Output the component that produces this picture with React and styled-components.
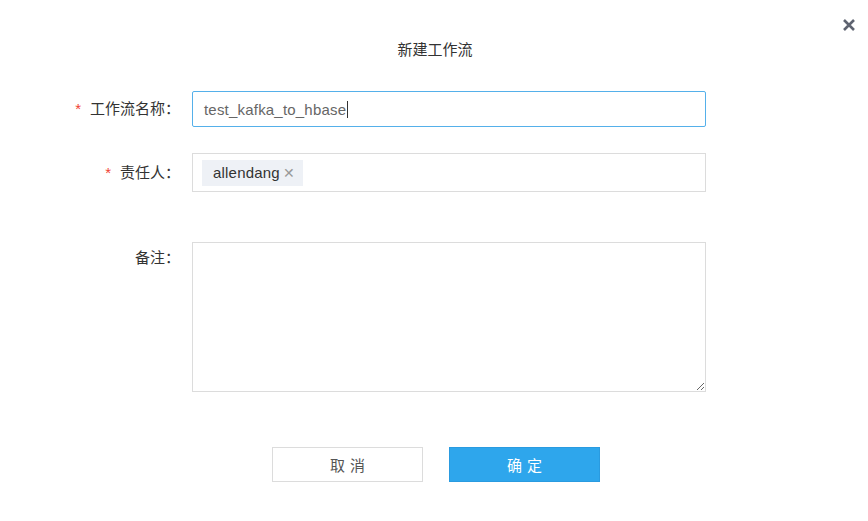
import React from 'react';
import styled, { createGlobalStyle } from 'styled-components';

const GlobalStyle = createGlobalStyle`
  body {
    margin: 0;
    background: #fff;
    font-family: "Liberation Sans", Arial, "Noto Sans CJK SC", sans-serif;
  }
`;

const Dialog = styled.div`
  position: relative;
  width: 868px;
  height: 521px;
  background: #fff;
  box-sizing: border-box;
  padding-top: 40px;
`;

const Close = styled.button`
  position: absolute;
  top: 17px;
  right: 11px;
  width: 16px;
  height: 16px;
  padding: 0;
  border: 0;
  background: none;
  display: flex;
  align-items: center;
  justify-content: center;
`;

const Title = styled.h3`
  margin: 0;
  text-align: center;
  font-size: 15px;
  font-weight: normal;
  color: #333;
  line-height: 20px;
  padding-left: 2px;
`;

const Form = styled.div`
  display: flex;
  flex-direction: column;
  padding-left: 60px;
  margin-top: 31px;
`;

const Row = styled.div`
  display: flex;
  align-items: ${p => (p.$top ? 'flex-start' : 'center')};
  margin-bottom: ${p => p.$mb || 0}px;
`;

const Label = styled.label`
  width: 120px;
  margin-right: 12px;
  text-align: right;
  font-size: 15px;
  color: #333;
  line-height: 20px;
  padding-top: ${p => (p.$top ? '6px' : '0')};
  white-space: nowrap;
`;

const Star = styled.span`
  color: #f04134;
  margin-right: 9px;
  font-size: 15px;
`;

const Input = styled.div`
  width: 514px;
  height: 36px;
  box-sizing: border-box;
  border: 1px solid #55b0ea;
  border-radius: 2px;
  padding: 0 11px;
  display: flex;
  align-items: center;
  font-size: 15px;
  letter-spacing: 0.2px;
  color: #666;
`;

const Caret = styled.span`
  display: inline-block;
  width: 1px;
  height: 17px;
  background: #333;
  margin-left: 1px;
`;

const Select = styled.div`
  width: 514px;
  height: 39px;
  box-sizing: border-box;
  border: 1px solid #dcdcdc;
  padding: 0 9px;
  display: flex;
  align-items: center;
`;

const Tag = styled.span`
  display: inline-flex;
  align-items: center;
  height: 26px;
  padding: 0 8px 0 11px;
  background: #eef1f6;
  font-size: 15px;
  letter-spacing: 0.2px;
  color: #333;
`;

const TagClose = styled.span`
  margin-left: 3px;
  color: #999;
  font-size: 14px;
`;

const TextArea = styled.textarea`
  width: 514px;
  height: 150px;
  box-sizing: border-box;
  border: 1px solid #dcdcdc;
  resize: both;
  font-family: inherit;
  outline: none;
`;

const Footer = styled.div`
  display: flex;
  justify-content: center;
  gap: 26px;
  margin-top: 55px;
  padding-left: 4px;
`;

const Button = styled.button`
  width: 151px;
  height: 35px;
  box-sizing: border-box;
  font-family: inherit;
  font-size: 15px;
  letter-spacing: 5px;
  text-indent: 5px;
  border: 1px solid ${p => (p.$primary ? '#2a9be0' : '#dcdcdc')};
  background: ${p => (p.$primary ? '#2ea6ec' : '#fff')};
  color: ${p => (p.$primary ? '#fff' : '#555')};
`;

export default function App() {
  return (
    <Dialog>
      <GlobalStyle />
      <Close>
        <svg width="14" height="14" viewBox="0 0 14 14">
          <path d="M2 2 L12 12 M12 2 L2 12" stroke="#5e6370" strokeWidth="2.6" strokeLinecap="butt" />
        </svg>
      </Close>
      <Title>新建工作流</Title>
      <Form>
        <Row $mb={26}>
          <Label><Star>*</Star>工作流名称：</Label>
          <Input>test_kafka_to_hbase<Caret /></Input>
        </Row>
        <Row $mb={50}>
          <Label><Star>*</Star>责任人：</Label>
          <Select>
            <Tag>allendang<TagClose>✕</TagClose></Tag>
          </Select>
        </Row>
        <Row $top>
          <Label $top>备注：</Label>
          <TextArea />
        </Row>
      </Form>
      <Footer>
        <Button>取消</Button>
        <Button $primary>确定</Button>
      </Footer>
    </Dialog>
  );
}
